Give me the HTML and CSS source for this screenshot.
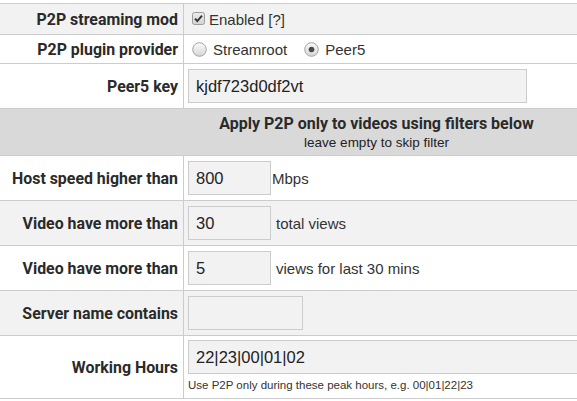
FILE: index.html
```html
<!DOCTYPE html>
<html>
<head>
<meta charset="utf-8">
<link rel="stylesheet" href="styles.css">
</head>
<body>
<div class="page">
  <div class="form">
    <div class="row alt r-check">
      <div class="label">P2P streaming mod</div>
      <div class="field">
        <span class="check"><svg width="13" height="13" viewBox="0 0 13 13"><defs><linearGradient id="cg" x1="0" y1="0" x2="0" y2="1"><stop offset="0" stop-color="#ececec"/><stop offset="1" stop-color="#d4d4d4"/></linearGradient></defs><rect x="0.5" y="0.5" width="12" height="12" rx="2" fill="url(#cg)" stroke="#9b9b9b"/><path d="M3 6.6 L5.3 9 L10 3.6" fill="none" stroke="#333" stroke-width="1.9"/></svg></span>
        <span class="txt">Enabled [?]</span>
      </div>
    </div>
    <div class="row r-radio">
      <div class="label">P2P plugin provider</div>
      <div class="field">
        <span class="radio"><svg width="15" height="15" viewBox="0 0 15 15"><defs><linearGradient id="rg" x1="0" y1="0" x2="0" y2="1"><stop offset="0" stop-color="#fafafa"/><stop offset="1" stop-color="#d6d6d6"/></linearGradient></defs><circle cx="7.5" cy="7.5" r="6.8" fill="url(#rg)" stroke="#a3a3a3"/></svg></span>
        <span class="txt">Streamroot</span>
        <span class="radio second"><svg width="15" height="15" viewBox="0 0 15 15"><defs><linearGradient id="rg2" x1="0" y1="0" x2="0" y2="1"><stop offset="0" stop-color="#fafafa"/><stop offset="1" stop-color="#d6d6d6"/></linearGradient></defs><circle cx="7.5" cy="7.5" r="6.8" fill="url(#rg2)" stroke="#a3a3a3"/><circle cx="7.5" cy="7.5" r="2.8" fill="#4a4a4a"/></svg></span>
        <span class="txt">Peer5</span>
      </div>
    </div>
    <div class="row r-std">
      <div class="label">Peer5 key</div>
      <div class="field">
        <input class="inp key" type="text" value="kjdf723d0df2vt">
      </div>
    </div>
    <div class="row head">
      <div class="head-title">Apply P2P only to videos using filters below</div>
      <div class="head-sub">leave empty to skip filter</div>
    </div>
    <div class="row r-std">
      <div class="label">Host speed higher than</div>
      <div class="field">
        <input class="inp small" type="text" value="800">
        <span class="unit tight">Mbps</span>
      </div>
    </div>
    <div class="row alt r-std">
      <div class="label">Video have more than</div>
      <div class="field">
        <input class="inp small" type="text" value="30">
        <span class="unit">total views</span>
      </div>
    </div>
    <div class="row r-std">
      <div class="label">Video have more than</div>
      <div class="field">
        <input class="inp small" type="text" value="5">
        <span class="unit">views for last 30 mins</span>
      </div>
    </div>
    <div class="row alt r-std">
      <div class="label">Server name contains</div>
      <div class="field">
        <input class="inp medium" type="text" value="">
      </div>
    </div>
    <div class="row r-tall">
      <div class="label">Working Hours</div>
      <div class="field stack">
        <input class="inp wide" type="text" value="22|23|00|01|02">
        <div class="help">Use P2P only during these peak hours, e.g. 00|01|22|23</div>
      </div>
    </div>
  </div>
</div>
</body>
</html>
```

FILE: styles.css
```css
html, body {
  margin: 0;
  padding: 0;
  background: #ffffff;
}

.page {
  width: 577px;
  height: 401px;
  overflow: hidden;
  padding-top: 3px;
  box-sizing: border-box;
}

.form {
  width: 753px;
  border-top: 1px solid #cccccc;
  font-family: "Liberation Sans", Arial, sans-serif;
  color: #333333;
}

.row {
  display: flex;
  box-sizing: border-box;
  border-bottom: 1px solid #cccccc;
  background: #ffffff;
}

.row.alt {
  background: #f2f2f2;
}

.r-check { height: 31px; }
.r-radio { height: 29px; }
.r-std { height: 45px; }
.r-tall { height: 63px; }

.label {
  width: 184px;
  flex: none;
  box-sizing: border-box;
  border-right: 1px solid #cccccc;
  display: flex;
  align-items: center;
  justify-content: flex-end;
  padding-right: 5px;
  font-family: Roboto, "Liberation Sans", sans-serif;
  font-weight: 700;
  font-size: 15.9px;
  color: #2a2a2a;
  white-space: nowrap;
}

.field {
  flex: 1;
  display: flex;
  align-items: center;
  padding: 0 4px;
  font-size: 15px;
  white-space: nowrap;
}

.field.stack {
  flex-direction: column;
  align-items: flex-start;
  justify-content: flex-start;
  padding-top: 4px;
}

.check {
  display: flex;
  margin: 0 3px 2px 4px;
}

.radio {
  display: flex;
  margin: 0 5px 0 4px;
}

.radio.second {
  margin-left: 17px;
}

.txt {
  margin-left: 1px;
}

.inp {
  box-sizing: border-box;
  height: 34px;
  margin: 0;
  border: 1px solid #cccccc;
  background: #f2f2f2;
  padding: 0 7px;
  font-family: "Liberation Sans", Arial, sans-serif;
  font-size: 16.5px;
  color: #222222;
  outline: none;
}

.inp.key { width: 339px; }
.inp.small { width: 83px; }
.inp.medium { width: 115px; }
.inp.wide { width: 520px; }

.unit {
  margin-left: 5px;
}

.unit.tight {
  margin-left: 1px;
}

.row.head {
  height: 47px;
  background: #d9d9d9;
  flex-direction: column;
  align-items: center;
  justify-content: center;
}

.head-title {
  font-family: Roboto, "Liberation Sans", sans-serif;
  font-weight: 700;
  font-size: 16px;
  line-height: 20px;
  color: #2a2a2a;
}

.head-sub {
  font-size: 13.5px;
  line-height: 17px;
  color: #222222;
}

.help {
  margin-top: 3px;
  font-size: 11.5px;
  line-height: 16px;
  color: #333333;
}
```
